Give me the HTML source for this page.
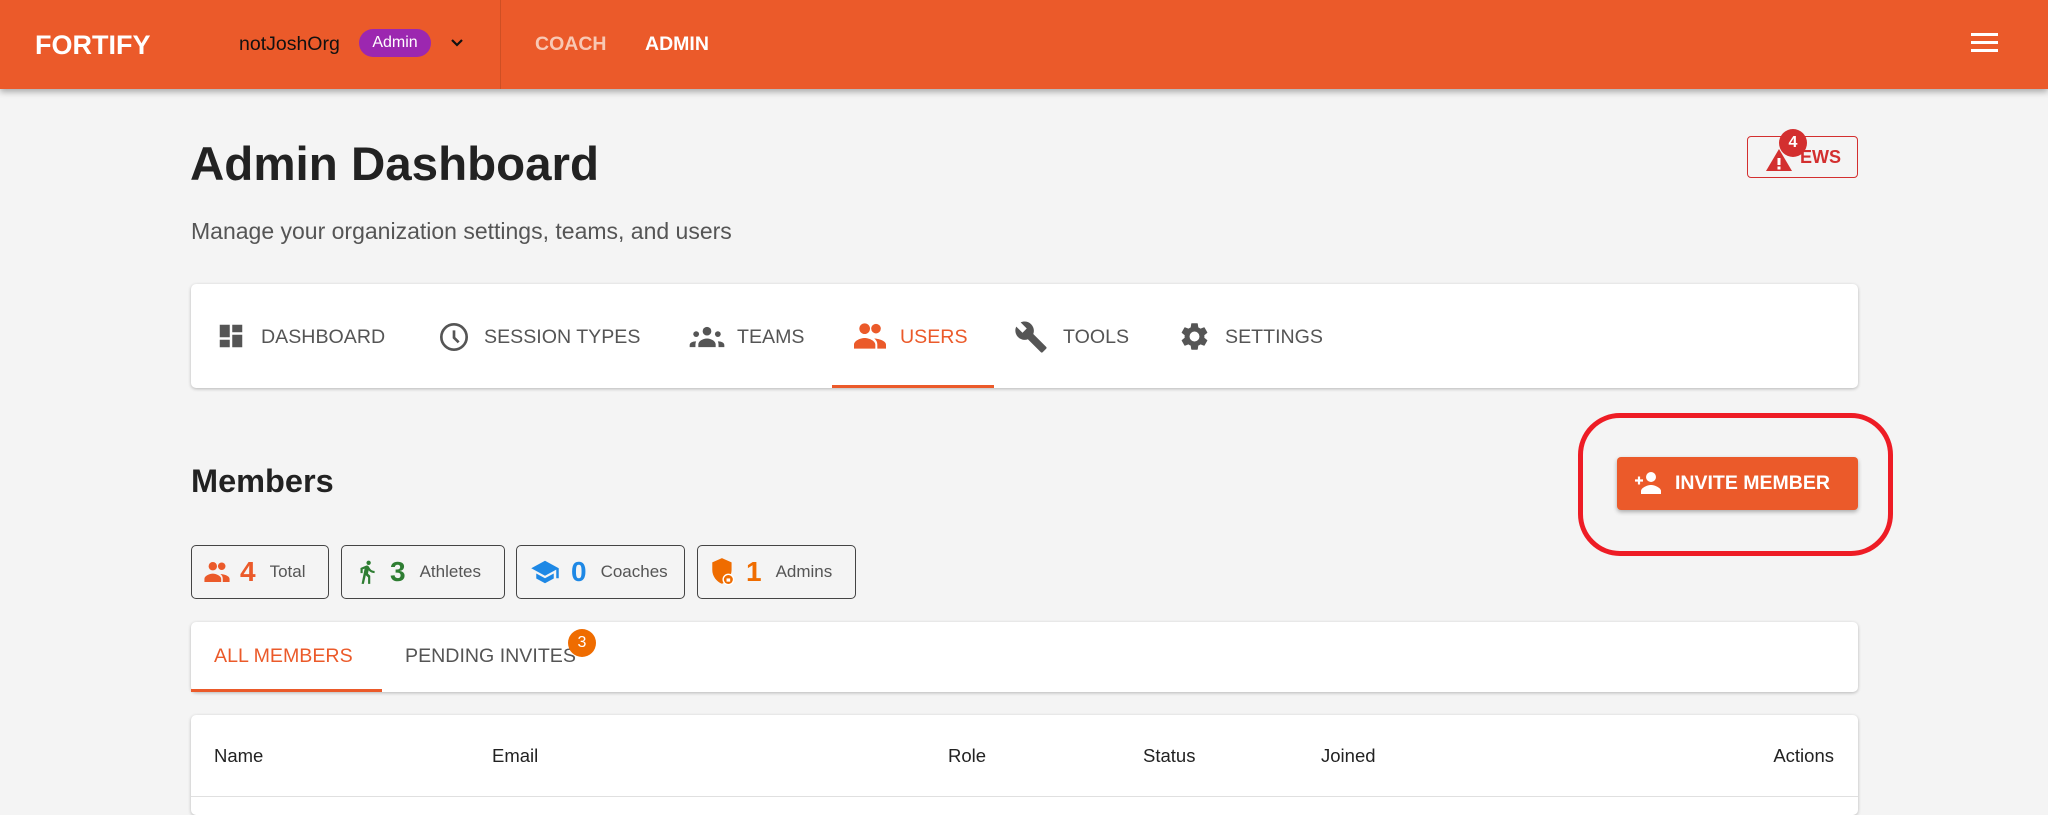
<!DOCTYPE html>
<html><head><meta charset="utf-8"><style>
*{box-sizing:border-box;margin:0;padding:0}
body{width:2048px;height:798px;overflow:hidden;background:#f4f4f4;font-family:"Liberation Sans",sans-serif;position:relative;color:#222}
.abs{position:absolute}
.hdr{left:0;top:0;width:2048px;height:89px;background:#eb5a2a;box-shadow:0 3px 6px rgba(0,0,0,.3)}
.card{background:#fff;border-radius:5px;box-shadow:0 1px 3px rgba(0,0,0,.25)}
.tab{position:absolute;top:326px;font-size:19.6px;color:#555;white-space:nowrap}
.chip{position:absolute;top:545px;height:54px;border:1.5px solid #444;border-radius:5px;display:flex;align-items:center;padding-left:12px}
.chip .n{font-size:28px;font-weight:bold;margin:0 14px 0 10px}
.chip .l{font-size:17px;color:#555}
.th{position:absolute;top:745px;font-size:18.5px;color:#222}
</style></head><body>
<div class="abs hdr"></div>
<div class="abs" style="left:35px;top:30px;font-size:27px;font-weight:bold;color:#fff">FORTIFY</div>
<div class="abs" style="left:239px;top:33px;font-size:19.5px;color:#111">notJoshOrg</div>
<div class="abs" style="left:359px;top:29px;width:72px;height:28px;border-radius:14px;background:#9c27b0;color:#fff;font-size:16px;text-align:center;line-height:28px">Admin</div>
<svg class="abs" style="left:449px;top:36px" width="16" height="14" viewBox="0 0 16 14"><path d="M3 4l5 5 5-5" stroke="#111" stroke-width="2.2" fill="none"/></svg>
<div class="abs" style="left:500px;top:0;width:1px;height:89px;background:rgba(0,0,0,.12)"></div>
<div class="abs" style="left:535px;top:33px;font-size:19.5px;font-weight:bold;color:#f8c8b4">COACH</div>
<div class="abs" style="left:645px;top:33px;font-size:19.5px;font-weight:bold;color:#fff">ADMIN</div>
<svg class="abs" style="left:1971px;top:33px" width="28" height="20"><rect y="0" width="27" height="3" fill="#fff"/><rect y="8" width="27" height="3" fill="#fff"/><rect y="16" width="27" height="3" fill="#fff"/></svg>

<div class="abs" style="left:190px;top:137px;font-size:47.5px;font-weight:bold;color:#222">Admin Dashboard</div>
<div class="abs" style="left:191px;top:218px;font-size:23px;color:#555">Manage your organization settings, teams, and users</div>

<div class="abs" style="left:1747px;top:136px;width:111px;height:42px;border:1.5px solid #d32f2f;border-radius:4px"></div>
<svg class="abs" style="left:1765px;top:148px" width="28" height="24" viewBox="0 0 28 24"><path d="M14 1L27 23H1z" fill="#d32f2f"/><rect x="12.5" y="10" width="3" height="7" fill="#fff"/><rect x="12.5" y="18.5" width="3" height="3" fill="#fff"/></svg>
<div class="abs" style="left:1800px;top:147px;font-size:18px;font-weight:bold;color:#d32f2f">EWS</div>
<div class="abs" style="left:1779px;top:129px;width:28px;height:28px;border-radius:50%;background:#d32f2f;color:#fff;font-size:16px;font-weight:bold;text-align:center;line-height:28px">4</div>

<div class="abs card" style="left:191px;top:284px;width:1667px;height:104px"></div>
<svg class="abs" style="left:216px;top:321px" width="30" height="30" viewBox="0 0 24 24"><path d="M3 13h8V3H3zm0 8h8v-6H3zm10 0h8V11h-8zm0-18v6h8V3z" fill="#555"/></svg>
<div class="tab" style="left:261px">DASHBOARD</div>
<svg class="abs" style="left:438px;top:321px" width="32" height="32" viewBox="0 0 24 24"><circle cx="12" cy="12" r="9.5" stroke="#555" stroke-width="2" fill="none"/><path d="M12 7v5.5l3.5 3.5" stroke="#555" stroke-width="2" fill="none"/></svg>
<div class="tab" style="left:484px">SESSION TYPES</div>
<svg class="abs" style="left:689px;top:324px" width="36" height="26" viewBox="0 0 24 18"><circle cx="12" cy="5" r="3" fill="#555"/><circle cx="4.5" cy="7" r="2" fill="#555"/><circle cx="19.5" cy="7" r="2" fill="#555"/><path d="M6 16v-2c0-2 3-4 6-4s6 2 6 4v2zM0 16v-1.5c0-1.5 2-2.5 4-2.5l.5.1C4 13 4 14 4 16zM24 16v-1.5c0-1.5-2-2.5-4-2.5l-.5.1c.5.9.5 1.9.5 3.9z" fill="#555"/></svg>
<div class="tab" style="left:737px">TEAMS</div>
<svg class="abs" style="left:854px;top:322px" width="32" height="28" viewBox="0 0 24 21"><circle cx="8" cy="5" r="4" fill="#eb5a2a"/><circle cx="16.5" cy="5" r="3.6" fill="#eb5a2a"/><path d="M0 20v-3c0-3 5-5 8-5s8 2 8 5v3zM17.5 20v-3c0-2-.8-3.5-2.3-4.6 3 .1 8.8 1.6 8.8 4.6v3z" fill="#eb5a2a"/></svg>
<div class="tab" style="left:900px;color:#eb5a2a">USERS</div>
<div class="abs" style="left:832px;top:385px;width:162px;height:3px;background:#eb5a2a"></div>
<svg class="abs" style="left:1014px;top:320px" width="34" height="34" viewBox="0 0 24 24"><path d="M22.7 19l-9.1-9.1c.9-2.3.4-5-1.5-6.9-2-2-5-2.4-7.4-1.3L9 6 6 9 1.6 4.7C.4 7.1.9 10.1 2.9 12.1c1.9 1.9 4.6 2.4 6.9 1.5l9.1 9.1c.4.4 1 .4 1.4 0l2.3-2.3c.5-.4.5-1.1.1-1.4z" fill="#555"/></svg>
<div class="tab" style="left:1063px">TOOLS</div>
<svg class="abs" style="left:1178px;top:320px" width="33" height="33" viewBox="0 0 24 24"><path d="M19.14 12.94c.04-.3.06-.61.06-.94 0-.32-.02-.64-.07-.94l2.03-1.58a.49.49 0 00.12-.61l-1.92-3.32a.49.49 0 00-.59-.22l-2.39.96c-.5-.38-1.030-.7-1.62-.94l-.36-2.54a.48.48 0 00-.48-.41h-3.84c-.24 0-.43.17-.47.41l-.36 2.54c-.59.24-1.13.57-1.62.94l-2.39-.96a.49.49 0 00-.59.22L2.740 8.870c-.12.21-.08.47.12.61l2.03 1.58c-.05.3-.09.63-.09.94s.02.64.07.94l-2.03 1.58a.49.49 0 00-.12.61l1.92 3.32c.12.22.37.29.59.22l2.39-.96c.5.38 1.03.7 1.62.94l.36 2.54c.05.24.24.41.48.41h3.84c.24 0 .44-.17.47-.41l.36-2.54c.59-.24 1.13-.56 1.62-.94l2.39.96c.22.08.47 0 .59-.22l1.92-3.32c.12-.22.07-.47-.12-.61zM12 15.6A3.6 3.6 0 1112 8.4a3.6 3.6 0 010 7.2z" fill="#555"/></svg>
<div class="tab" style="left:1225px">SETTINGS</div>

<div class="abs" style="left:191px;top:463px;font-size:32.5px;font-weight:bold;color:#222">Members</div>

<div class="abs" style="left:1578px;top:413px;width:315px;height:143px;border:5px solid #ee1c25;border-radius:42px"></div>
<div class="abs" style="left:1617px;top:457px;width:241px;height:53px;background:#eb5a2a;border-radius:4px;box-shadow:0 2px 4px rgba(0,0,0,.3)"></div>
<svg class="abs" style="left:1634px;top:471px" width="28" height="24" viewBox="0 0 28 24"><path d="M1 9.5h8M5 5.5v8" stroke="#fff" stroke-width="2.2"/><circle cx="17" cy="6" r="5" fill="#fff"/><path d="M7 23v-3c0-3 6-6 10-6s10 3 10 6v3z" fill="#fff"/></svg>
<div class="abs" style="left:1675px;top:472px;font-size:19.5px;font-weight:bold;color:#fff">INVITE MEMBER</div>

<div class="chip" style="left:191px;width:138px"><svg width="26" height="22" viewBox="0 0 24 21"><circle cx="8" cy="5" r="4" fill="#eb5a2a"/><circle cx="16.5" cy="5" r="3.6" fill="#eb5a2a"/><path d="M0 20v-3c0-3 5-5 8-5s8 2 8 5v3zM17.5 20v-3c0-2-.8-3.5-2.3-4.6 3 .1 8.8 1.6 8.8 4.6v3z" fill="#eb5a2a"/></svg><span class="n" style="color:#eb5a2a">4</span><span class="l">Total</span></div>
<div class="chip" style="left:341px;width:164px"><svg width="26" height="34" viewBox="0 0 24 24"><circle cx="13.5" cy="3.5" r="2" fill="#2e7d32"/><path d="M9.8 8.9L7 23h2.1l1.8-8 2.1 2v6h2v-7.5l-2.1-2 .6-3C14.8 12 16.8 13 19 13v-2c-1.9 0-3.5-1-4.3-2.4l-1-1.6c-.4-.6-1-1-1.7-1-.3 0-.5.1-.8.1L6 8.3V13h2V9.6l1.8-.7" fill="#2e7d32"/></svg><span class="n" style="color:#2e7d32">3</span><span class="l">Athletes</span></div>
<div class="chip" style="left:516px;width:169px"><svg width="32" height="30" viewBox="0 0 24 24"><path d="M5 13.2v4L12 21l7-3.8v-4L12 17zM12 3L1 9l11 6 9-4.9V17h2V9z" fill="#1e88e5"/></svg><span class="n" style="color:#1e88e5">0</span><span class="l">Coaches</span></div>
<div class="chip" style="left:697px;width:159px"><svg width="26" height="30" viewBox="0 0 24 28"><path d="M11 1L2 5v7c0 6 4 11 9 13 5-2 9-7 9-13V5z" fill="#ef6c00"/><circle cx="17" cy="21" r="5.5" fill="#fff"/><circle cx="17" cy="21" r="4.2" fill="#ef6c00"/><rect x="15.3" y="20" width="3.4" height="3" fill="#fff"/></svg><span class="n" style="color:#ef6c00">1</span><span class="l">Admins</span></div>

<div class="abs card" style="left:191px;top:622px;width:1667px;height:70px"></div>
<div class="abs" style="left:214px;top:645px;font-size:19.6px;color:#eb5a2a">ALL MEMBERS</div>
<div class="abs" style="left:191px;top:689px;width:191px;height:3px;background:#eb5a2a"></div>
<div class="abs" style="left:405px;top:645px;font-size:19.6px;color:#555">PENDING INVITES</div>
<div class="abs" style="left:568px;top:629px;width:28px;height:28px;border-radius:50%;background:#ef6c00;color:#fff;font-size:16px;text-align:center;line-height:28px">3</div>

<div class="abs card" style="left:191px;top:715px;width:1667px;height:100px"></div>
<div class="abs" style="left:191px;top:796px;width:1667px;height:1px;background:#e0e0e0"></div>
<div class="th" style="left:214px">Name</div>
<div class="th" style="left:492px">Email</div>
<div class="th" style="left:948px">Role</div>
<div class="th" style="left:1143px">Status</div>
<div class="th" style="left:1321px">Joined</div>
<div class="th" style="left:1764px;width:70px;text-align:right">Actions</div>
</body></html>
